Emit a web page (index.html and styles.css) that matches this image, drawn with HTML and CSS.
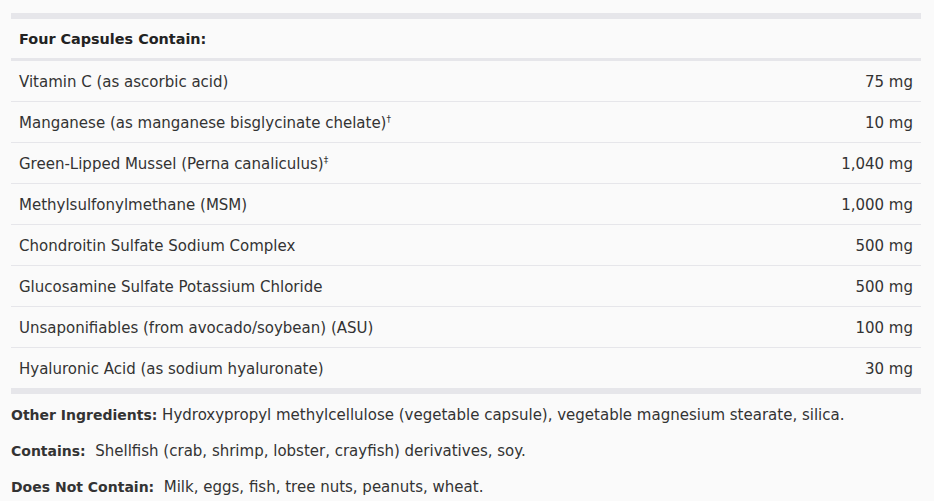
FILE: index.html
```html
<!DOCTYPE html>
<html lang="en">
<head>
  <link rel="stylesheet" href="styles.css">
</head>
<body>
  <div class="facts">
    <table class="facts-table">
      <thead>
        <tr><th colspan="2">Four Capsules Contain:</th></tr>
      </thead>
      <tbody>
        <tr><td>Vitamin C (as ascorbic acid)</td><td class="amt">75 mg</td></tr>
        <tr><td>Manganese (as manganese bisglycinate chelate)<sup>&dagger;</sup></td><td class="amt">10 mg</td></tr>
        <tr><td>Green-Lipped Mussel (Perna canaliculus)<sup>&Dagger;</sup></td><td class="amt">1,040 mg</td></tr>
        <tr><td>Methylsulfonylmethane (MSM)</td><td class="amt">1,000 mg</td></tr>
        <tr><td>Chondroitin Sulfate Sodium Complex</td><td class="amt">500 mg</td></tr>
        <tr><td>Glucosamine Sulfate Potassium Chloride</td><td class="amt">500 mg</td></tr>
        <tr><td>Unsaponifiables (from avocado/soybean) (ASU)</td><td class="amt">100 mg</td></tr>
        <tr><td>Hyaluronic Acid (as sodium hyaluronate)</td><td class="amt">30 mg</td></tr>
      </tbody>
    </table>
    <p class="note"><b>Other Ingredients:</b> Hydroxypropyl methylcellulose (vegetable capsule), vegetable magnesium stearate, silica.</p>
    <p class="note"><b>Contains:</b>&nbsp; Shellfish (crab, shrimp, lobster, crayfish) derivatives, soy.</p>
    <p class="note"><b>Does Not Contain:</b>&nbsp; Milk, eggs, fish, tree nuts, peanuts, wheat.</p>
  </div>
</body>
</html>
```

FILE: styles.css
```css
body {
    margin: 0;
    background: #fafafa;
    font-family: "DejaVu Sans", sans-serif;
    color: #333;
}
.facts {
    padding: 13px 13px 0 11px;
}
.facts-table {
    width: 100%;
    border-collapse: collapse;
    border-top: 6px solid #e6e6ea;
    border-bottom: 6px solid #e6e6ea;
    font-size: 15px;
}
.facts-table th {
    text-align: left;
    font-weight: bold;
    font-size: 14.4px;
    color: #222;
    height: 39px;
    padding: 0 8px;
    border-bottom: 3px solid #e6e6ea;
}
.facts-table td {
    height: 39px;
    padding: 1px 8px 0;
    border-bottom: 1px solid #e6e6ea;
}
.facts-table tr:last-child td {
    border-bottom: none;
}
.facts-table .amt {
    text-align: right;
    white-space: nowrap;
}
.facts-table sup {
    font-size: 9px;
    line-height: 0;
}
.note {
    margin: 0;
    font-size: 15px;
    line-height: 36px;
}
.facts-table + .note {
    margin-top: 3px;
}
.note b {
    font-weight: bold;
    font-size: 14px;
}
```
